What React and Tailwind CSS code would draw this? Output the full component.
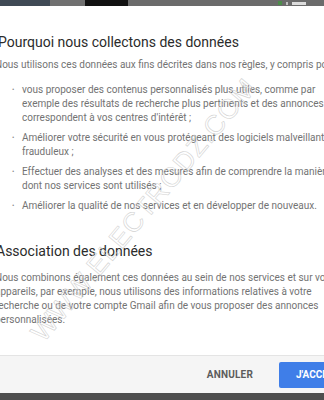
export default function App() {
  const items = [
    [
      'vous proposer des contenus personnalisés plus utiles, comme par',
      'exemple des résultats de recherche plus pertinents et des annonces qui',
      "correspondent à vos centres d'intérêt ;",
    ],
    ['Améliorer votre sécurité en vous protégeant des logiciels malveillants et', 'frauduleux ;'],
    ['Effectuer des analyses et des mesures afin de comprendre la manière', 'dont nos services sont utilisés ;'],
    ['Améliorer la qualité de nos services et en développer de nouveaux.'],
  ];

  const para = [
    'Nous combinons également ces données au sein de nos services et sur vos',
    'appareils, par exemple, nous utilisons des informations relatives à votre',
    'recherche ou de votre compte Gmail afin de vous proposer des annonces',
    'personnalisées.',
  ];

  return (
    <div className="relative flex h-[400px] w-[324px] flex-col overflow-hidden bg-white font-['Roboto',sans-serif]">
      {/* capture strip at the top */}
      <div className="flex h-[6px] shrink-0">
        <div className="w-[50px] bg-[#3f4a55]" />
        <div className="w-[35px] bg-[#707070]" />
        <div className="w-[43px] bg-[#111111]" />
        <div className="flex-1 bg-[#6b6b6b]" />
        <div className="flex w-[54px] items-center gap-1 bg-[#6b6b6b] pl-2">
          <span className="h-[4px] w-[4px] bg-[#4c8c4a]" />
          <span className="h-[3px] w-[2px] bg-[#c0c0c0]" />
          <span className="h-[3px] w-[14px] bg-[#dcdcdc]" />
        </div>
      </div>

      <div className="ml-[-5px] flex-1 pt-[26px] text-[10px] leading-[14px] text-[#737373]">
        <h2 className="ml-[3px] text-[14px] leading-[20px] text-[#2b2b2b]">Pourquoi nous collectons des données</h2>
        <p className="mt-[6px] whitespace-nowrap">
          Nous utilisons ces données aux fins décrites dans nos règles, y compris pour :
        </p>
        <ul className="mt-[11px] flex flex-col gap-[6px] pl-[17px]">
          {items.map((lines, i) => (
            <li key={i} className="flex">
              <span className="w-[10px] shrink-0 text-[7px] text-[#8a8a8a]">•</span>
              <div className="flex flex-col">
                {lines.map((l, j) => (
                  <span key={j} className="whitespace-nowrap">
                    {l}
                  </span>
                ))}
              </div>
            </li>
          ))}
        </ul>
        <h2 className="mt-[28px] ml-[1px] text-[14px] leading-[20px] text-[#2b2b2b]">Association des données</h2>
        <div className="mt-[10px] flex flex-col">
          {para.map((l, i) => (
            <span key={i} className="whitespace-nowrap">
              {l}
            </span>
          ))}
        </div>
      </div>

      <div className="flex h-[38px] shrink-0 items-center justify-end gap-[26px] border-t border-[#e4e4e4] bg-[#f5f5f5]">
        <button className="text-[10px] font-bold tracking-[0.2px] text-[#5c5c5c]">ANNULER</button>
        <button className="mr-[-40px] h-[26px] w-[85px] rounded-[2px] bg-[#3f7ee8] pl-[17px] text-left text-[10px] font-bold text-white">
          J'ACCEPTE
        </button>
      </div>
      <div className="h-[7px] shrink-0 bg-[#4e4e4e]" />

      {/* watermark */}
      <div className="pointer-events-none absolute left-[144px] top-[210px] -translate-x-1/2 -translate-y-1/2 -rotate-[50deg] whitespace-nowrap font-['Liberation_Sans',sans-serif] text-[27px] tracking-[1px] text-transparent [-webkit-text-stroke:0.6px_#d2d2d2]">
        WWW.ELECTRODZ.COM
      </div>
    </div>
  );
}
